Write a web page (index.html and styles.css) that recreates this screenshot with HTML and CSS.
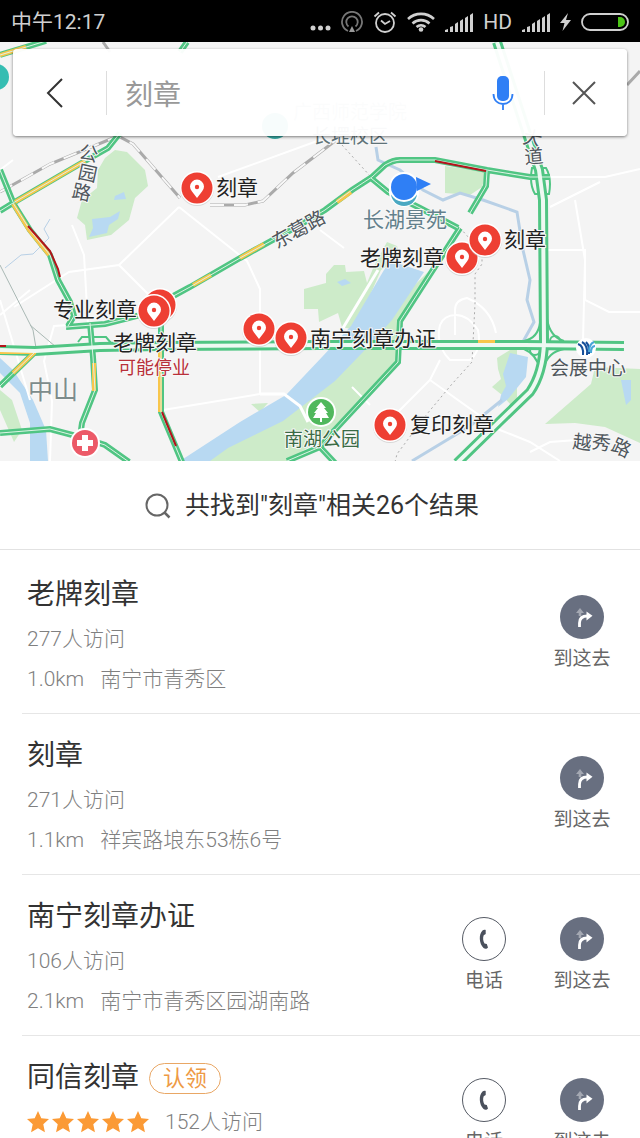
FILE: index.html
```html
<!DOCTYPE html>
<html lang="zh-CN">
<head>
    <meta charset="UTF-8">
    <meta name="viewport" content="width=device-width, initial-scale=1.0">
    <title>刻章</title>
    <link rel="stylesheet" href="styles.css">
</head>
<body>
    <!-- Shared icons -->
    <svg class="sprite" width="0" height="0" aria-hidden="true">
        <defs>
            <symbol id="signal" viewBox="0 0 28 20">
                <path d="M0 20v-2l3-1v3zM5 20v-5l3-1v6zM10 20v-8l3-2v10zM15 20V9l3-2v13zM20 20V6l3-2v16zM25 20V3l3-2v19z" fill="#d0d0d0"/>
            </symbol>
            <symbol id="go" viewBox="0 0 44 44">
                <circle cx="22" cy="22" r="22" fill="#686f80"/>
                <path d="M20 13l-4 5h2.700v3h2.600v-3H24z" fill="#a4a8b2"/>
                <path d="M19.500 32v-4c0-4.500 2.500-7 8-7" fill="none" stroke="#fff" stroke-width="2.800"/>
                <path d="M26.500 16.500l6 4.300-6 4.700z" fill="#fff"/>
            </symbol>
            <symbol id="phone" viewBox="0 0 44 44">
                <circle cx="22" cy="22" r="21.500" fill="#fff" stroke="#555a64"/>
                <path d="M20.500 13.500c1-1 2.500-1 3.200-.5v4l-2 1.200c-1 2.500-.7 5.800.8 8.300l2.300.5 1.200 3.500c-1 1.500-3 1.800-4.500.5-4.500-4.500-5-13.500-1-17.500z" fill="#4a505c"/>
            </symbol>
            <symbol id="star" viewBox="0 0 20 20">
                <path d="M10 0l3 6.500 7 .8-5.200 4.800 1.500 7.200-6.300-3.600-6.300 3.600 1.500-7.200L0 7.300l7-.8z" fill="#fb9a35"/>
            </symbol>
            <g id="pin">
                <circle cy="1" r="17" fill="#bbb" opacity=".5"/>
                <circle r="17" fill="#fff"/>
                <circle r="15.500" fill="#ee3f33"/>
                <path d="M0 10L-5 3.500a7 7 0 1 1 10 0z" fill="#fff"/>
                <circle cy="-1" r="2.200" fill="#ee3f33"/>
            </g>
        </defs>
    </svg>

    <div class="app">
        <!-- Status bar -->
        <header class="status-bar">
            <span>中午12:17</span>
            <div class="status-icons">
                <svg width="21" height="20" viewBox="0 0 21 20"><g fill="#d0d0d0"><circle cx="3" cy="16" r="2.500"/><circle cx="10.500" cy="16" r="2.500"/><circle cx="18" cy="16" r="2.500"/></g></svg>
                <svg width="22" height="22" viewBox="0 0 22 22" fill="none" stroke="#777" stroke-width="1.800"><path d="M7 20a10 10 0 1 1 8 0M7.500 15.500a5.700 5.700 0 1 1 7 0"/><path d="M11 15l3 6H8z" fill="#999" stroke="none"/></svg>
                <svg width="24" height="22" viewBox="0 0 24 22" fill="none" stroke="#d0d0d0" stroke-width="1.800"><circle cx="12" cy="12" r="9"/><path d="M8 9.500l4 3.500 5-3M1.500 5.500l4.500-4M22.500 5.500l-4.500-4"/></svg>
                <svg width="28" height="20" viewBox="0 0 28 20" fill="none" stroke="#d0d0d0" stroke-width="2.600"><path d="M1 7a19 19 0 0 1 26 0M5.500 11.500a12.500 12.500 0 0 1 17 0M9.500 15a7 7 0 0 1 9 0"/><circle cx="14" cy="17.500" r="2.300" fill="#d0d0d0" stroke="none"/></svg>
                <svg width="28" height="20"><use href="#signal"/></svg>
                <span>HD</span>
                <svg width="28" height="20"><use href="#signal"/></svg>
                <svg width="11" height="20" viewBox="0 0 11 20"><path d="M8 1L0 11h4.500L2.500 19 11 8H6z" fill="#d0d0d0"/></svg>
                <svg width="48" height="20" viewBox="0 0 48 20"><rect x="1" y="2" width="46" height="16" rx="8" fill="none" stroke="#d0d0d0" stroke-width="1.800"/><path d="M37 5h2a5 5 0 0 1 0 10h-2z" fill="#4cc417"/></svg>
            </div>
        </header>

        <!-- Map -->
        <section class="map">
            <svg class="map-canvas" viewBox="0 42 640 419" role="img" aria-label="地图">
                <defs>
                    <g id="roads" fill="none">
                        <path d="M0 55L46 41M187 42l-7 10M0 170l13 32M0 211l13-8 72-42 23-13 12-15M13 203l17 27 20 25 8 25 12 22 4 14-6 10M155 306l35-19 50-29 60-33 25-15 27-20 20-13 13-12q8-5 15-5h35l52 10 43 7h20M487 171l-1 15-16 27M460 228l-60 93-2 41-65 70-13 15-33 14M320 447l15 16M371 178l17 14 32 16 38 20M35 352L0 386M90 323l3 34 2 33-13 33-2 14M66 327l39-3 32-8 18-10M0 433l50-4 30 8 25 8 24 17M161 316v96l21 50"/>
                    </g>
                    <g id="highways" fill="none">
                        <path d="M0 350l35 1 65-4 60-1 160-1h204l100 1M497 42l31 95 11 33 4 30 1 143q-1 30-14 49l-30 29-43 42"/>
                    </g>
                </defs>
                <rect y="42" width="640" height="419" fill="#f4f4f4"/>

                <!-- Parks -->
                <g fill="#cdebc9">
                    <path d="M115 150l12 2 18 18 3 16-13 12-6 22-18 15-24 5-2-15-8-7 5-18 15-12 1-18 7-12z"/>
                    <path d="M445 166l41 6-4 15-12 8-25-2z"/>
                    <path d="M304 289l22-6v-9l8-9h11l1 7 18-1 3 12 7-17 13-24 10 4 4 12-20 12-26 60-13-3-4-14-19 9-1-13h-14z"/>
                    <path d="M428 272l-29 50-2 40-65 70-45 29h-85l80-55 60-50z"/>
                    <path d="M545 424l46-40 4-17 45 2v74l-35-16-30-4z"/>
                    <path d="M497 358l13-8 7-1v50l-6 6-9-10-10-8 9-8-3-10z"/>
                    <path d="M0 390l12 10 10 30-8 12-14-32zM251 404l17-1-8 9z"/>
                </g>
                <!-- Water -->
                <g fill="#b8d9f2">
                    <path d="M384 270l7-9 33 11-32 48-29 32-28 29-52 40-55 27-18 13h-30l60-39 46-27 36-38 29-31z"/>
                    <path d="M0 358l13 12 20 30 13 30 2 31H30v-38l-10-30-20-20z"/>
                    <path d="M510 353l18 4-2 20-18 22-10 8 3-12 5-9-3-12z"/>
                    <path d="M92 219l18-2 10-6-2 8-9 6-2 8-18 4 4-9zM115 196l9-4 2 7-12 1zM621 380h10v20l-5 5zM337 282l8-3 6 4-9 3z"/>
                </g>
                <g fill="none" stroke="#b8d0e6">
                    <path d="M376 147l2 13 22 10 23 20 20 10 17-7 23 7 34 12 6 38 7 30-3 20 7 22-14 25M502 400l-32 26-58 35" stroke-width="3"/>
                    <path d="M5 268l16-13 12-1 16-16-5-9 6-10" stroke-width="1"/>
                </g>
                <!-- Side streets -->
                <g fill="none" stroke="#fff" stroke-width="2">
                    <path d="M13 160L0 170M218 177l102-37M179 207l-60 58-50 7-55 35M179 207l68 54 13 28v105l-97 16M119 265l30 30M72 225l12 30 4 70M0 315l30-25M50 461l2-60-8-40 10-35 30-2M545 177h60l35-8M575 200l10 60-2 82M550 207l50-25M545 250h40v50l24 12h31M455 335v-25q0-10 12-12 24 10 29 35M440 325q-5 20 10 35h20q12-10 8-30-10-15-22-15-12 0-16 10M440 360l-10 20-35 35M430 380l70 50 30 12 30 19M370 405l-18-18M530 452l20-10 40-3M320 230l24 18M0 300l30 100"/>
                    <path d="M378 270l-35 58M260 394h24l16 12 8 16" stroke-width="3"/>
                </g>
                <path d="M0 265l33 65 3 18M30 325l26 22" fill="none" stroke="#a9b8b4"/>
                <!-- Railways -->
                <g fill="none">
                    <path d="M0 192l50-28 68-28 15 8 47 54M210 205h35l18-4 30-28 42-32M103 42l7 10M627 85l13-14" stroke="#aaa" stroke-width="3"/>
                    <path d="M0 192l50-28 68-28 15 8 47 54M210 205h35l18-4 30-28 42-32" stroke="#f8f8f8" stroke-width="2" stroke-dasharray="14 10"/>
                    <path d="M342 145l29 32M460 228l22 24v12l-7 10v30l-3 58-20 22-25 30-30 40-3 12" stroke="#aaa" stroke-dasharray="2 3"/>
                </g>

                <!-- Roads with traffic -->
                <use href="#roads" stroke="#50c583" stroke-width="6"/>
                <use href="#highways" stroke="#50c583" stroke-width="10"/>
                <g fill="none" stroke="#50c583" stroke-width="2">
                    <path d="M524 341q14-3 16-18M524 349q12 5 16 20M564 341q-14-4-17-22M564 349q-16 3-20 18"/>
                    <circle cx="535" cy="350" r="5"/><circle cx="555" cy="341" r="5"/>
                    <path d="M532 168h14q6 10 3 26h-14q-6-10-3-26zM78 342l4-5h24l5 6"/>
                </g>
                <g fill="none" stroke="#f8c64c" stroke-width="4">
                    <path d="M0 55l26-8M15 202l70-41M13 204l16 26 20 25M240 258l24-14M193 285l18-10M337 202l14-10M160 350v62M94 363v28M35 352l-22 21M0 352h36M478 342h17"/>
                </g>
                <use href="#roads" stroke="#dcf3e4" stroke-width="1"/>
                <use href="#highways" stroke="#eef9f2" stroke-width="4"/>
                <path d="M28 226l22 25 8 18 2 8M435 161l51 10M162 412l14 34M0 346h6" fill="none" stroke="#b3131b" stroke-width="2"/>

                <!-- Places -->
                <circle cx="-4" cy="77" r="13" fill="#35bdb2"/>
                <circle cx="275" cy="126" r="13" fill="#35aaa4"/>
                <g class="place">
                    <text x="350" y="119" class="faint" text-anchor="middle">广西师范学院</text>
                    <text x="350" y="143" text-anchor="middle">长堽校区</text>
                    <text x="363" y="227" class="area">长湖景苑</text>
                    <text x="28" y="399" class="district">中山</text>
                    <text x="550" y="375" class="road">会展中心</text>
                    <text x="284" y="446" class="park">南湖公园</text>
                </g>
                <g class="place road">
                    <text transform="translate(78 158) rotate(12)">公</text>
                    <text transform="translate(77 178) rotate(12)">园</text>
                    <text transform="translate(71 197) rotate(12)">路</text>
                    <text transform="translate(277 249) rotate(-29)">东葛路</text>
                    <text transform="translate(522 143) rotate(12)">大</text>
                    <text transform="translate(525 164) rotate(-5)">道</text>
                    <text transform="translate(572 448) rotate(6)">越</text>
                    <text transform="translate(591 448) rotate(8)">秀</text>
                    <text transform="translate(610 450) rotate(25)">路</text>
                </g>
                <circle cx="321" cy="412" r="15" fill="#fff"/>
                <circle cx="321" cy="412" r="13" fill="#50b85c"/>
                <path d="M321 402l5 6h-2l4 5h-2l3 5h-7v4h-2v-4h-7l3-5h-2l4-5h-2z" fill="#fff"/>
                <circle cx="85" cy="443" r="15" fill="#fff"/>
                <circle cx="85" cy="443" r="13" fill="#ec5a68"/>
                <path d="M82 435h6v5h5v6h-5v5h-6v-5h-5v-6h5z" fill="#fff"/>
                <circle cx="586" cy="348" r="10" fill="#fff"/>
                <path d="M578 344q6 2 5 11M582 342q6 3 5 13M586 342q4 4 3 12" fill="none" stroke="#17509b" stroke-width="2"/>
                <path d="M589 352q0-8 5-10M591 353q0-7 4-7" fill="none" stroke="#48a5d8" stroke-width="2"/>

                <!-- Current position -->
                <circle cx="404" cy="192" r="15" fill="#fff"/>
                <circle cx="404" cy="193" r="13" fill="#4aa8c2"/>
                <circle cx="404" cy="187" r="15" fill="#fff"/>
                <path d="M416 177l15 7-14 7z" fill="#2f7ff5"/>
                <circle cx="404" cy="187" r="13" fill="#2f7ff5"/>

                <!-- Search results -->
                <use href="#pin" x="197" y="188"/>
                <use href="#pin" x="462" y="258"/>
                <use href="#pin" x="485" y="240"/>
                <use href="#pin" x="160" y="305"/>
                <use href="#pin" x="154" y="311"/>
                <use href="#pin" x="259" y="329"/>
                <use href="#pin" x="291" y="338"/>
                <use href="#pin" x="390" y="425"/>
                <g class="result-label">
                    <text x="216" y="195">刻章</text>
                    <text x="360" y="265">老牌刻章</text>
                    <text x="504" y="247">刻章</text>
                    <text x="53" y="317">专业刻章</text>
                    <text x="113" y="350">老牌刻章</text>
                    <text x="118" y="374" class="closed">可能停业</text>
                    <text x="310" y="346">南宁刻章办证</text>
                    <text x="410" y="432">复印刻章</text>
                </g>
            </svg>

            <form class="search-bar">
                <button type="button" class="back" aria-label="返回">
                    <svg width="18" height="30" viewBox="0 0 18 30"><path d="M16 1L2 15l14 14" fill="none" stroke="#333" stroke-width="2"/></svg>
                </button>
                <input type="text" value="刻章" aria-label="搜索">
                <button type="button" class="mic" aria-label="语音">
                    <svg width="22" height="34" viewBox="0 0 22 34"><rect x="5" y="0" width="12" height="25" rx="5" fill="#2f7ff5"/><path d="M1.500 18c0 6 4 10 9.500 10s9.500-4 9.500-10M11 28v6" fill="none" stroke="#2f7ff5" stroke-width="1.800"/></svg>
                </button>
                <button type="button" class="close" aria-label="清除">
                    <svg width="24" height="24" viewBox="0 0 24 24"><path d="M1 1l22 22M23 1L1 23" stroke="#555" stroke-width="2"/></svg>
                </button>
            </form>
        </section>

        <!-- Result list -->
        <main class="results">
            <h1 class="summary">
                <svg width="26" height="26" viewBox="0 0 26 26" fill="none" stroke="#666" stroke-width="2"><circle cx="12" cy="12" r="10.500"/><path d="M19.500 19.500l5 5" stroke-width="2.500"/></svg>
                共找到"刻章"相关26个结果
            </h1>
            <ul class="list">
                <li class="item">
                    <div class="info">
                        <h2>老牌刻章</h2>
                        <p>277人访问</p>
                        <p><span>1.0km</span><span>南宁市青秀区</span></p>
                    </div>
                    <div class="actions">
                        <button type="button"><svg width="44" height="44"><use href="#go"/></svg>到这去</button>
                    </div>
                </li>
                <li class="item">
                    <div class="info">
                        <h2>刻章</h2>
                        <p>271人访问</p>
                        <p><span>1.1km</span><span>祥宾路埌东53栋6号</span></p>
                    </div>
                    <div class="actions">
                        <button type="button"><svg width="44" height="44"><use href="#go"/></svg>到这去</button>
                    </div>
                </li>
                <li class="item">
                    <div class="info">
                        <h2>南宁刻章办证</h2>
                        <p>106人访问</p>
                        <p><span>2.1km</span><span>南宁市青秀区园湖南路</span></p>
                    </div>
                    <div class="actions">
                        <button type="button"><svg width="44" height="44"><use href="#phone"/></svg>电话</button>
                        <button type="button"><svg width="44" height="44"><use href="#go"/></svg>到这去</button>
                    </div>
                </li>
                <li class="item">
                    <div class="info">
                        <h2>同信刻章 <span class="tag">认领</span></h2>
                        <p>
                            <span class="stars" role="img" aria-label="5星">
                                <svg width="22" height="22"><use href="#star"/></svg>
                                <svg width="22" height="22"><use href="#star"/></svg>
                                <svg width="22" height="22"><use href="#star"/></svg>
                                <svg width="22" height="22"><use href="#star"/></svg>
                                <svg width="22" height="22"><use href="#star"/></svg>
                            </span>
                            <span>152人访问</span>
                        </p>
                    </div>
                    <div class="actions">
                        <button type="button"><svg width="44" height="44"><use href="#phone"/></svg>电话</button>
                        <button type="button"><svg width="44" height="44"><use href="#go"/></svg>到这去</button>
                    </div>
                </li>
            </ul>
        </main>
    </div>
</body>
</html>
```
FILE: styles.css
```css
* {
    box-sizing: border-box;
}
body {
    margin: 0;
    background-color: #fff;
    color: #333;
    font-family: Roboto, "Noto Sans CJK SC", sans-serif;
    font-weight: 300;
}
button, input {
    font: inherit;
    color: inherit;
    background: none;
    border: none;
    padding: 0;
}
svg {
    flex: none;
}
.sprite {
    position: absolute;
}
.app {
    display: flex;
    flex-direction: column;
    height: 100vh;
    overflow: hidden;
}

/* Status bar */
.status-bar {
    display: flex;
    flex: none;
    align-items: center;
    justify-content: space-between;
    padding: 7px 11px 5px;
    background-color: #000;
    color: #d0d0d0;
    font-size: 21px;
    line-height: 30px;
    font-weight: 400;
}
.status-icons {
    display: flex;
    align-items: center;
    gap: 10px;
}

/* Map */
.map {
    position: relative;
    flex: none;
}
.map-canvas {
    display: block;
    width: 100%;
}
.map text {
    paint-order: stroke;
    stroke: #f8f8f8;
    stroke-width: 2px;
    stroke-linejoin: round;
}
.place {
    font-size: 19px;
    font-weight: 400;
    fill: #5f7378;
}
.place .faint {
    fill: #9fb0b4;
    stroke: none;
}
.place .area {
    font-size: 21px;
    fill: #63808c;
}
.place .district {
    font-size: 25px;
    fill: #7d8c8c;
}
.place .road, .place.road {
    fill: #4f565c;
}
.place .park {
    fill: #3a6b45;
}
.result-label {
    font-size: 21px;
    font-weight: 400;
    fill: #222;
}
.result-label .closed {
    font-size: 18px;
    fill: #b8303a;
}

/* Search bar */
.search-bar {
    position: absolute;
    top: 7px;
    left: 13px;
    right: 13px;
    display: flex;
    align-items: center;
    height: 87px;
    background-color: rgba(255, 255, 255, 0.96);
    border-radius: 4px;
    box-shadow: 0 1px 3px rgba(0, 0, 0, 0.5);
}
.search-bar button {
    display: flex;
    align-items: center;
    justify-content: center;
    height: 44px;
}
.search-bar input {
    flex: 1;
    min-width: 0;
    padding-left: 18px;
    font-size: 28px;
    font-weight: 400;
    color: #999;
}
.search-bar .back {
    width: 94px;
    padding-right: 10px;
    border-right: 1px solid #ddd;
}
.search-bar .mic {
    width: 84px;
    border-right: 1px solid #ddd;
}
.search-bar .close {
    width: 82px;
    padding-right: 4px;
}

/* Results */
.results {
    flex: 1;
    min-height: 0;
    overflow: hidden;
}
.summary {
    display: flex;
    align-items: center;
    justify-content: center;
    gap: 14px;
    margin: 0;
    padding: 25px 16px 23px 0;
    border-bottom: 1px solid #e2e2e2;
    font-size: 25px;
    line-height: 40px;
    font-weight: 400;
}
.list {
    list-style: none;
    margin: 0;
    padding: 3px 0 0 22px;
}
.item {
    display: flex;
    justify-content: space-between;
    padding: 22px 29px 14px 5px;
    border-bottom: 1px solid #e6e6e6;
}
.info h2 {
    display: flex;
    align-items: center;
    gap: 10px;
    margin: 0 0 4px;
    font-size: 28px;
    line-height: 40px;
    font-weight: 400;
}
.info p {
    display: flex;
    align-items: center;
    gap: 16px;
    margin: 0;
    font-size: 21px;
    line-height: 40px;
    color: #808080;
}
.tag {
    padding: 0 13px;
    border: 1px solid #e9a765;
    border-radius: 16px;
    color: #ee9a45;
    font-size: 22px;
    line-height: 29px;
}
.stars {
    display: flex;
    gap: 3px;
}
.actions {
    display: flex;
    align-items: flex-start;
    gap: 40px;
    padding-top: 20px;
}
.actions button {
    display: flex;
    flex-direction: column;
    align-items: center;
    gap: 5px;
    width: 58px;
    font-size: 19px;
    line-height: 30px;
    font-weight: 400;
    color: #666;
}
```
